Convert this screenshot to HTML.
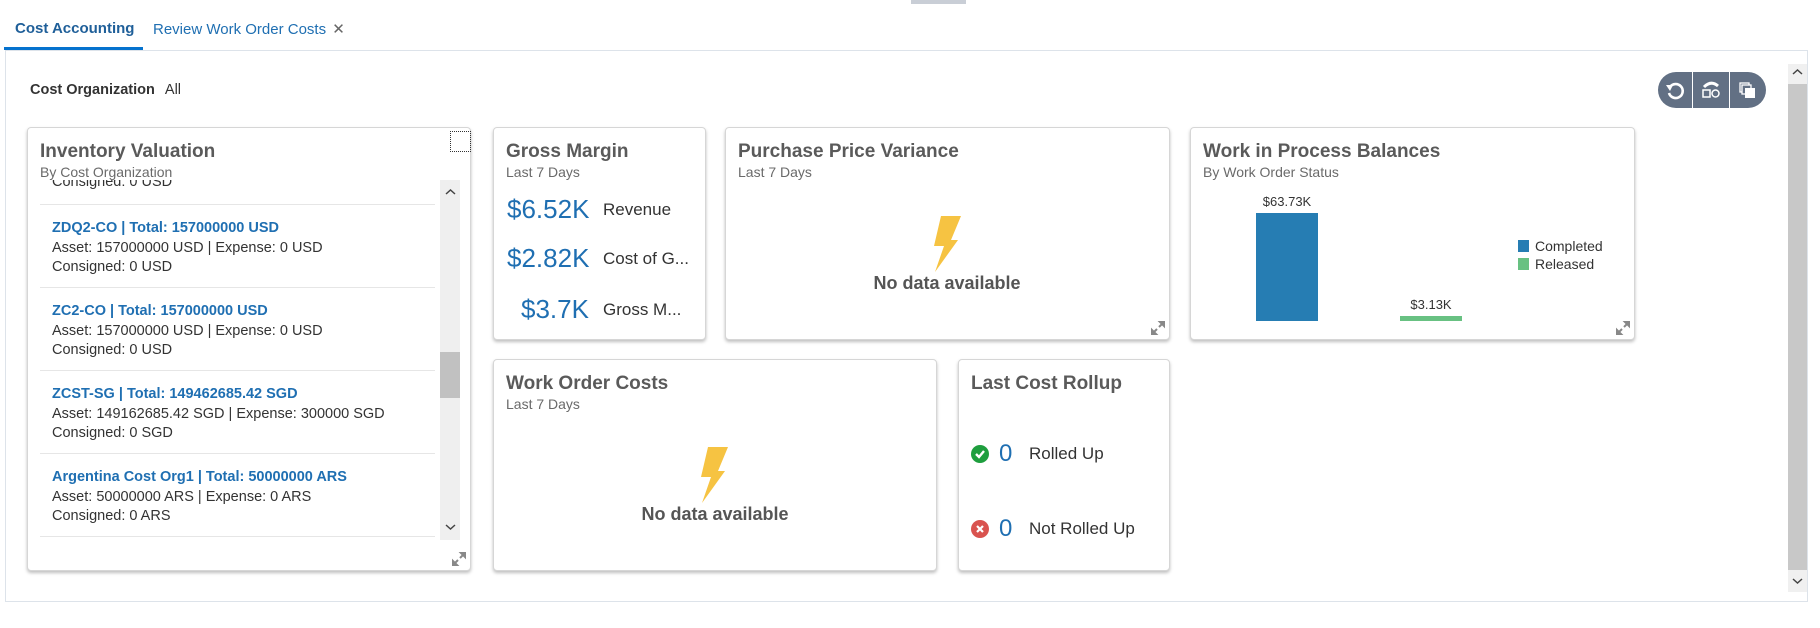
<!DOCTYPE html>
<html><head><meta charset="utf-8"><style>
*{box-sizing:border-box;margin:0;padding:0}
body{width:1820px;height:628px;background:#fff;font-family:"Liberation Sans",Arial,sans-serif;color:#333;position:relative;overflow:hidden}
.a{position:absolute;white-space:nowrap}
.card{position:absolute;background:#fff;border:1px solid #d6d6d6;border-radius:4px;box-shadow:0 2px 3px rgba(0,0,0,.25)}
.t{position:absolute;left:12px;top:13px;font-size:19px;font-weight:bold;color:#5a5a5a}
.s{position:absolute;left:12px;top:36px;font-size:14px;color:#6a6a6a}
.blue{color:#1f6fb2}
.nd{position:absolute;font-size:18px;font-weight:bold;color:#555;transform:translateX(-50%)}
.exp{position:absolute;right:4px;bottom:4px;width:14px;height:14px}
.it{position:absolute;left:12px;font-size:14.5px;line-height:19.5px;color:#333}
.it b{color:#1f6fb2}
.dv{position:absolute;left:12px;width:395px;height:1px;background:#e6e6e6}
</style></head><body>
<div class="a" style="left:911px;top:0;width:55px;height:4px;background:#c9ced6"></div>
<div class="a" style="left:15px;top:20px;font-size:15px;font-weight:bold;color:#1f5f99">Cost Accounting</div>
<div class="a" style="left:153px;top:20px;font-size:15px;color:#1f6fb2">Review Work Order Costs <span style="color:#666;margin-left:2px">✕</span></div>
<div class="a" style="left:5px;top:50px;width:1803px;height:552px;border:1px solid #dde3ea"></div>
<div class="a" style="left:4px;top:47px;width:139px;height:3px;background:#0572ce"></div>
<div class="a" style="left:30px;top:82px;font-size:14.5px;font-weight:bold;color:#333">Cost Organization <span style="font-weight:normal;margin-left:6px">All</span></div>
<div class="a" style="left:1658px;top:72px;width:108px;height:36px;background:#627084;border-radius:18px"></div>
<div class="a" style="left:1692px;top:72px;width:1px;height:36px;background:#fff"></div>
<div class="a" style="left:1729px;top:72px;width:1px;height:36px;background:#fff"></div>
<svg class="a" style="left:1664px;top:79px" width="22" height="22" viewBox="0 0 22 22"><path d="M6 8 A7 7 0 1 1 5 14" fill="none" stroke="#fff" stroke-width="2.6"/><path d="M2 6 L9 6 L6 12Z" fill="#fff"/></svg>
<svg class="a" style="left:1700px;top:79px" width="22" height="22" viewBox="0 0 22 22"><path d="M4 8 Q11 1 18 7" fill="none" stroke="#fff" stroke-width="3"/><rect x="3" y="11" width="7" height="7" fill="none" stroke="#fff" stroke-width="1.5"/><circle cx="15.5" cy="14.5" r="3.5" fill="none" stroke="#fff" stroke-width="1.5"/></svg>
<svg class="a" style="left:1737px;top:79px" width="22" height="22" viewBox="0 0 22 22"><rect x="3" y="4" width="9" height="9" fill="none" stroke="#fff" stroke-width="1.3"/><rect x="5" y="6" width="9" height="9" fill="#627084" stroke="#fff" stroke-width="1.3"/><rect x="8" y="9" width="10" height="10" fill="#fff"/></svg>
<div class="a" style="left:1788px;top:64px;width:19px;height:528px;background:#f0f0f0"></div>
<div class="a" style="left:1788px;top:84px;width:19px;height:486px;background:#c8c8c8"></div>
<svg class="a" style="left:1792px;top:68px" width="11" height="8" viewBox="0 0 11 8"><path d="M1 6 L5.5 2 L10 6" stroke="#444" stroke-width="1.5" fill="none"/></svg>
<svg class="a" style="left:1792px;top:577px" width="11" height="8" viewBox="0 0 11 8"><path d="M1 2 L5.5 6 L10 2" stroke="#444" stroke-width="1.5" fill="none"/></svg>

<div class="card" style="left:27px;top:127px;width:444px;height:444px">
<div class="t">Inventory Valuation</div><div class="s">By Cost Organization</div>
<div class="a" style="left:422px;top:3px;width:21px;height:21px;border:1px dotted #333"></div>
<div class="a" style="left:12px;top:52px;width:420px;height:360px;overflow:hidden">
<div class="it" style="left:12px;top:-7px">Consigned: 0 USD</div>
<div class="dv" style="top:24px;left:0"></div>
<div class="it" style="top:39px"><b>ZDQ2-CO | Total: 157000000 USD</b><br>Asset: 157000000 USD | Expense: 0 USD<br>Consigned: 0 USD</div>
<div class="dv" style="top:107px;left:0"></div>
<div class="it" style="top:122px"><b>ZC2-CO | Total: 157000000 USD</b><br>Asset: 157000000 USD | Expense: 0 USD<br>Consigned: 0 USD</div>
<div class="dv" style="top:190px;left:0"></div>
<div class="it" style="top:205px"><b>ZCST-SG | Total: 149462685.42 SGD</b><br>Asset: 149162685.42 SGD | Expense: 300000 SGD<br>Consigned: 0 SGD</div>
<div class="dv" style="top:273px;left:0"></div>
<div class="it" style="top:288px"><b>Argentina Cost Org1 | Total: 50000000 ARS</b><br>Asset: 50000000 ARS | Expense: 0 ARS<br>Consigned: 0 ARS</div>
<div class="dv" style="top:356px;left:0"></div>
<div class="a" style="left:400px;top:0;width:20px;height:360px;background:#efefef"></div>
<div class="a" style="left:400px;top:172px;width:20px;height:46px;background:#c1c1c1"></div>
<svg class="a" style="left:405px;top:8px" width="11" height="8" viewBox="0 0 11 8"><path d="M1 6 L5.5 2 L10 6" stroke="#444" stroke-width="1.5" fill="none"/></svg>
<svg class="a" style="left:405px;top:343px" width="11" height="8" viewBox="0 0 11 8"><path d="M1 2 L5.5 6 L10 2" stroke="#444" stroke-width="1.5" fill="none"/></svg>
</div>
<svg class="exp" viewBox="0 0 14 14"><path d="M2 12 L6 8 M8 6 L12 2 M1 9 L1 13 L5 13Z M9 1 L13 1 L13 5Z" stroke="#888" stroke-width="2" fill="#888"/></svg>
</div>

<div class="card" style="left:493px;top:127px;width:213px;height:213px">
<div class="t">Gross Margin</div><div class="s">Last 7 Days</div>
<div class="a blue" style="left:13px;top:66px;font-size:26px">$6.52K</div><div class="a" style="left:109px;top:72px;font-size:17px">Revenue</div>
<div class="a blue" style="left:13px;top:115px;font-size:26px">$2.82K</div><div class="a" style="left:109px;top:121px;font-size:17px">Cost of G...</div>
<div class="a blue" style="left:27px;top:166px;font-size:26px">$3.7K</div><div class="a" style="left:109px;top:172px;font-size:17px">Gross M...</div>
</div>

<div class="card" style="left:725px;top:127px;width:445px;height:213px">
<div class="t">Purchase Price Variance</div><div class="s">Last 7 Days</div>
<svg class="a" style="left:205px;top:88px" width="34" height="56" viewBox="0 0 34 56"><path d="M10 0 L30 0 L20 24 L27 24 L4 56 L13 30 L3 30Z" fill="#f6c342"/></svg>
<div class="nd" style="left:221px;top:145px">No data available</div>
<svg class="exp" viewBox="0 0 14 14"><path d="M2 12 L6 8 M8 6 L12 2 M1 9 L1 13 L5 13Z M9 1 L13 1 L13 5Z" stroke="#888" stroke-width="2" fill="#888"/></svg>
</div>

<div class="card" style="left:1190px;top:127px;width:445px;height:213px">
<div class="t">Work in Process Balances</div><div class="s">By Work Order Status</div>
<div class="a" style="left:96px;top:66px;font-size:13px;transform:translateX(-50%)">$63.73K</div>
<div class="a" style="left:65px;top:85px;width:62px;height:108px;background:#267db3"></div>
<div class="a" style="left:240px;top:169px;font-size:13px;transform:translateX(-50%)">$3.13K</div>
<div class="a" style="left:209px;top:188px;width:62px;height:5px;background:#68c182"></div>
<div class="a" style="left:327px;top:112px;width:11px;height:12px;background:#267db3"></div>
<div class="a" style="left:344px;top:110px;font-size:14px">Completed</div>
<div class="a" style="left:327px;top:130px;width:11px;height:12px;background:#68c182"></div>
<div class="a" style="left:344px;top:128px;font-size:14px">Released</div>
<svg class="exp" viewBox="0 0 14 14"><path d="M2 12 L6 8 M8 6 L12 2 M1 9 L1 13 L5 13Z M9 1 L13 1 L13 5Z" stroke="#888" stroke-width="2" fill="#888"/></svg>
</div>

<div class="card" style="left:493px;top:359px;width:444px;height:212px">
<div class="t">Work Order Costs</div><div class="s">Last 7 Days</div>
<svg class="a" style="left:204px;top:87px" width="34" height="56" viewBox="0 0 34 56"><path d="M10 0 L30 0 L20 24 L27 24 L4 56 L13 30 L3 30Z" fill="#f6c342"/></svg>
<div class="nd" style="left:221px;top:144px">No data available</div>
</div>

<div class="card" style="left:958px;top:359px;width:212px;height:212px">
<div class="t">Last Cost Rollup</div>
<svg class="a" style="left:12px;top:85px" width="18" height="18" viewBox="0 0 18 18"><circle cx="9" cy="9" r="9" fill="#1e9e3e"/><path d="M5 9 L8 12 L13 6" stroke="#fff" stroke-width="2.4" fill="none"/></svg>
<div class="a blue" style="left:40px;top:80px;font-size:24px">0</div>
<div class="a" style="left:70px;top:84px;font-size:17px">Rolled Up</div>
<svg class="a" style="left:12px;top:160px" width="18" height="18" viewBox="0 0 18 18"><circle cx="9" cy="9" r="9" fill="#d9534f"/><path d="M6 6 L12 12 M12 6 L6 12" stroke="#fff" stroke-width="2.2"/></svg>
<div class="a blue" style="left:40px;top:155px;font-size:24px">0</div>
<div class="a" style="left:70px;top:159px;font-size:17px">Not Rolled Up</div>
</div>
</body></html>
